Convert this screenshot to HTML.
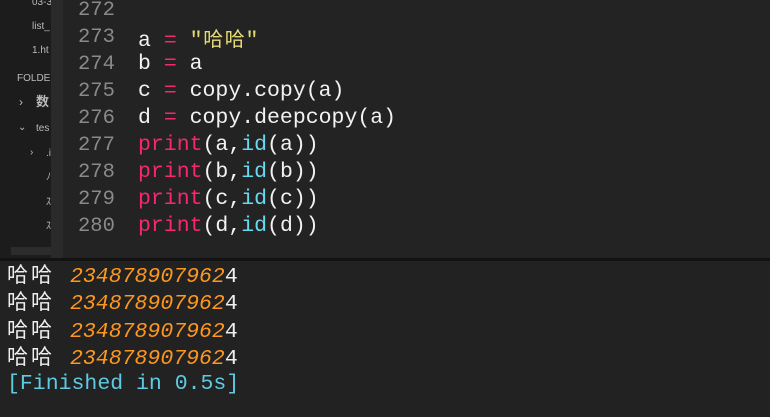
<!DOCTYPE html><html><head><style>
body{margin:0;width:770px;height:417px;overflow:hidden;background:#222;position:relative;font-family:"Liberation Mono","Noto Sans CJK SC",monospace}
.sb{position:absolute;left:0;top:0;width:51px;height:258px;background:#1c1c1c;overflow:hidden;font-family:"Liberation Sans","Noto Sans CJK SC",sans-serif;color:#bbb;font-size:10px}
.sb div{position:absolute;white-space:nowrap;line-height:14px}
.gut{position:absolute;left:51px;top:0;width:12px;height:258px;background:#2a2a2a}
.ed{position:absolute;left:63px;top:0;width:707px;height:258px;background:#232323}
.sep{position:absolute;left:0;top:258px;width:770px;height:3px;background:#131313}
.hs{position:absolute;left:11px;top:247px;width:40px;height:8px;background:#2c2c2c}
.ln{position:absolute;left:78px;color:#8a8a8a;font-size:20.5px;line-height:27px;height:27px}
.cd{position:absolute;left:138px;color:#f2f2f2;font-size:21.5px;white-space:pre;line-height:27px;height:27px}
.p{color:#f92672}.s{color:#e6db74}.c{color:#66d9ef}
.o{position:absolute;left:7px;font-size:21.5px;color:#eee;white-space:pre;line-height:27px;height:27px}
.n{color:#fd971f;font-style:italic}
.k{display:inline-block;width:24px;text-align:left;font-family:"Noto Sans CJK SC",sans-serif;font-size:21px}
.ks{display:inline-block;width:15px}
.k2{display:inline-block;width:21.5px;text-align:center;font-family:"Noto Sans CJK SC",sans-serif;font-size:20px}
</style></head><body>
<div class="sb">
<div style="left:32px;top:-4px">03-3</div>
<div style="left:32px;top:20px">list_</div>
<div style="left:32px;top:44px">1.ht</div>
<div style="left:17px;top:72px">FOLDE</div>
<div style="left:19px;top:95px;font-size:12px">›</div><div style="left:36px;top:95px;font-size:13px;font-weight:bold">数</div>
<div style="left:18px;top:121px">⌄</div><div style="left:36px;top:122px">tes</div>
<div style="left:30px;top:146px">›</div><div style="left:46px;top:147px">.i</div>
<div style="left:46px;top:171px">ﾉ</div>
<div style="left:46px;top:196px">ｽ</div>
<div style="left:46px;top:220px">ｽ</div>
</div>
<div class="gut"></div><div class="ed"></div><div class="hs"></div><div class="sep"></div>
<div class="ln" style="top:-3px">272</div>
<div class="ln" style="top:24px">273</div><div class="cd" style="top:24px">a <span class="p">=</span> <span class="s">"<span class="k2">哈</span><span class="k2">哈</span>"</span></div>
<div class="ln" style="top:51px">274</div><div class="cd" style="top:51px">b <span class="p">=</span> a</div>
<div class="ln" style="top:78px">275</div><div class="cd" style="top:78px">c <span class="p">=</span> copy.copy(a)</div>
<div class="ln" style="top:105px">276</div><div class="cd" style="top:105px">d <span class="p">=</span> copy.deepcopy(a)</div>
<div class="ln" style="top:132px">277</div><div class="cd" style="top:132px"><span class="p">print</span>(a,<span class="c">id</span>(a))</div>
<div class="ln" style="top:159px">278</div><div class="cd" style="top:159px"><span class="p">print</span>(b,<span class="c">id</span>(b))</div>
<div class="ln" style="top:186px">279</div><div class="cd" style="top:186px"><span class="p">print</span>(c,<span class="c">id</span>(c))</div>
<div class="ln" style="top:213px">280</div><div class="cd" style="top:213px"><span class="p">print</span>(d,<span class="c">id</span>(d))</div>
<div class="o" style="top:261px"><span class="k">哈</span><span class="k">哈</span><span class="ks"></span><span class="n">234878907962</span>4</div>
<div class="o" style="top:288px"><span class="k">哈</span><span class="k">哈</span><span class="ks"></span><span class="n">234878907962</span>4</div>
<div class="o" style="top:316px"><span class="k">哈</span><span class="k">哈</span><span class="ks"></span><span class="n">234878907962</span>4</div>
<div class="o" style="top:343px"><span class="k">哈</span><span class="k">哈</span><span class="ks"></span><span class="n">234878907962</span>4</div>
<div class="o" style="top:371px;color:#5ecbe3">[Finished in 0.5s]</div>
</body></html>
